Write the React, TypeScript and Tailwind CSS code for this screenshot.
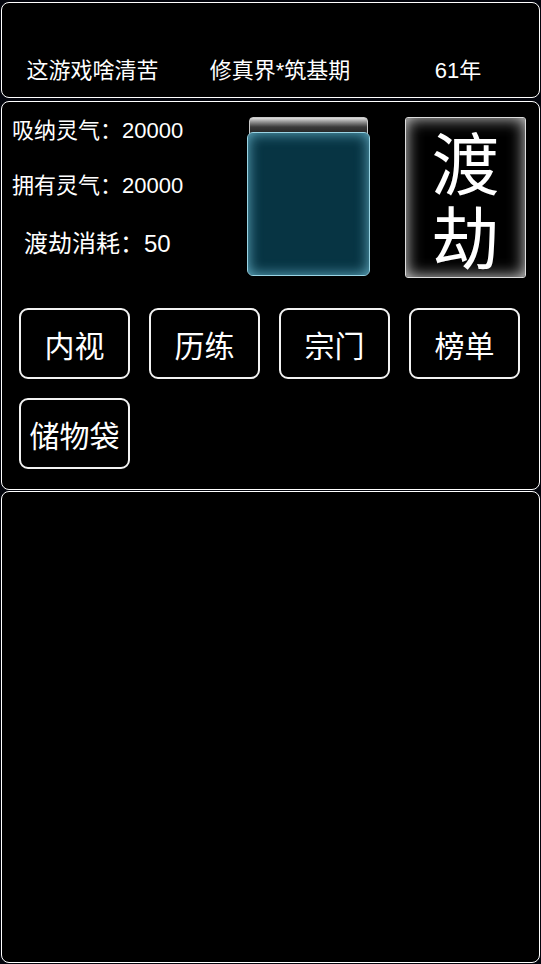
import React from "react";

const font = { fontFamily: '"Liberation Sans", "Noto Sans CJK SC", sans-serif' };
const cjk = { fontFamily: '"Noto Sans CJK SC", sans-serif' };

export default function App() {
  return (
    <div className="w-[541px] h-[964px] overflow-hidden bg-[#03050d] text-white" style={font}>
      {/* Header panel */}
      <div className="mx-[1px] mt-[2px] h-[96px] rounded-[8px] border-[1.5px] border-white bg-black">
        <div className="grid grid-cols-[181px_194px_1fr] pt-[53px] text-[22px] leading-[30px]">
          <div className="text-center">这游戏啥清苦</div>
          <div className="text-center">修真界*筑基期</div>
          <div className="text-center">61年</div>
        </div>
      </div>

      {/* Main panel */}
      <div className="mx-[1px] mt-[3px] h-[389px] rounded-[8px] border-[1.5px] border-white bg-black">
        <div className="flex pt-[15px]">
          <div className="w-[244px] pl-[10px] text-[22px] leading-[28px]">
            <div>吸纳灵气：20000</div>
            <div className="mt-[27px]">拥有灵气：20000</div>
            <div className="mt-[30px] pl-[12px] text-[24px]">渡劫消耗：50</div>
          </div>
          {/* vessel */}
          <div className="relative ml-[1px] w-[123px] h-[159px]">
            <div className="absolute left-[2px] right-[2px] top-0 h-[20px] rounded-t-[4px] border border-[#c8c8c8] bg-gradient-to-b from-[#e0e0e0] via-[#3a3a3a] to-[#1a1a1a]" />
            <div className="absolute left-0 right-0 top-[15px] bottom-0 rounded-[6px] border border-[#9ad4e4] bg-[#073443] shadow-[inset_0_0_14px_rgba(120,200,225,0.85)]" />
          </div>
          {/* 渡劫 button */}
          <div
            className="ml-[35px] flex h-[161px] w-[121px] flex-col items-center justify-center gap-[6px] rounded-[3px] border border-[#dddddd] bg-black shadow-[inset_0_0_16px_rgba(255,255,255,0.85)]"
            style={cjk}
          >
            <div className="text-[68px] leading-none">渡</div>
            <div className="text-[68px] leading-none">劫</div>
          </div>
        </div>
        <div className="grid grid-cols-[111px_111px_111px_111px] gap-[19px] pl-[17px] pt-[30px]" style={cjk}>
          {["内视", "历练", "宗门", "榜单", "储物袋"].map((t) => (
            <div
              key={t}
              className="flex h-[71px] items-center justify-center rounded-[9px] border-2 border-[#f2f2f2] text-[30px] leading-none"
            >
              {t}
            </div>
          ))}
        </div>
      </div>

      {/* Bottom panel */}
      <div className="mx-[1px] mt-[1px] h-[472px] rounded-[8px] border-[1.5px] border-white bg-black" />
    </div>
  );
}
